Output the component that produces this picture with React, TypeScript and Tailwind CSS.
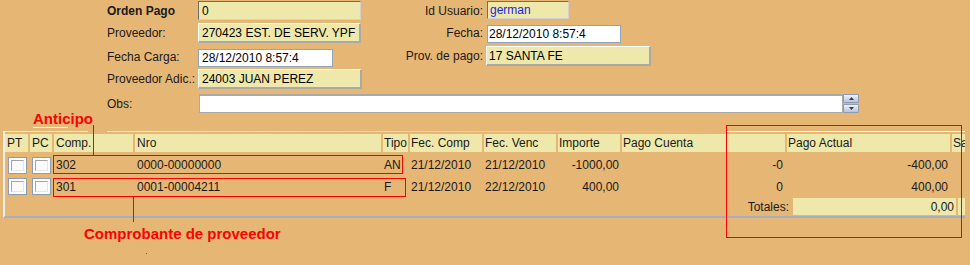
import React from 'react';

const cols = [
  'w-[23px]', 'w-[22px]', 'w-[79px]', 'w-[246px]', 'w-[25px]', 'w-[72px]',
  'w-[72px]', 'w-[62px]', 'w-[163px]', 'w-[163px]', 'w-[40px]',
];
const headPad = [
  'pl-[2px]', 'pl-[2px]', 'pl-[2px]', 'pl-[2px]', 'pl-[1px]', 'pl-[1px]',
  'pl-[1px]', 'pl-[1px]', 'pl-[1px]', 'pl-[1px]', 'pl-[1px]',
];
const dataPad = [
  'pl-[3px]', 'pl-[2px]', 'pl-[2px]', 'pl-[2px]', 'pl-[1px]', 'pl-[1px]',
  'pl-[1px]', 'justify-end pr-[1px]', 'justify-end pr-[2px]', 'justify-end pr-[2px]', '',
];
const headers = ['PT', 'PC', 'Comp.', 'Nro', 'Tipo', 'Fec. Comp', 'Fec. Venc', 'Importe', 'Pago Cuenta', 'Pago Actual', 'Saldo'];

function Check() {
  return (
    <div className="w-[19px] h-[17px] border border-[#8C9CB4] bg-white p-[2px]">
      <div className="w-full h-full border-t border-l border-t-[#A4A4A4] border-l-[#A4A4A4] border-r border-b border-r-[#E6E6E6] border-b-[#E6E6E6] bg-[#FBFBFB]" />
    </div>
  );
}

function DataRow({ cells, h }: { cells: React.ReactNode[]; h: string }) {
  return (
    <div className={`flex gap-x-[2px] ${h}`}>
      {cells.map((c, i) => (
        <div key={i} className={`${cols[i]} shrink-0 flex items-center ${dataPad[i]}`}>
          {c}
        </div>
      ))}
    </div>
  );
}

const inset =
  'border-t border-l border-t-[#6E6E6E] border-l-[#6E6E6E] border-r border-b border-r-[#D2D2D2] border-b-[#D2D2D2]';
const outset =
  'border-t border-l border-t-[#FFFFFF] border-l-[#FFFFFF] border-r-2 border-b-2 border-r-[#A9A9A9] border-b-[#A9A9A9]';
const flat = 'border border-[#8FA3BF]';

export default function App() {
  return (
    <div className="relative w-[970px] h-[265px] overflow-hidden bg-[#E6B674] text-[12px] leading-[14px] text-[#1A1A1A] font-['Liberation_Sans',Arial,sans-serif]">
      {/* Form */}
      <div className="pl-[107px]">
        {/* Row 1 */}
        <div className="flex items-start h-[22px]">
          <div className="w-[91px] mt-[4px] font-bold">Orden Pago</div>
          <div className={`w-[163px] h-[19px] mt-[1px] bg-[#EEE8AA] ${inset} flex items-center pl-[3px] text-black`}>0</div>
          <div className="w-[122px] mt-[4px] text-right">Id Usuario:</div>
          <div className={`ml-[4px] w-[82px] h-[18px] mt-[1px] bg-[#EEE8AA] ${inset} flex items-center pl-[2px] text-[#1F1FE6]`}>german</div>
        </div>
        {/* Row 2 */}
        <div className="flex items-start h-[23px]">
          <div className="w-[91px] mt-[4px]">Proveedor:</div>
          <div className={`w-[163px] h-[20px] mt-[1px] bg-[#EEE8AA] ${outset} flex items-center pl-[3px] text-black`}>270423 EST. DE SERV. YPF</div>
          <div className="w-[122px] mt-[4px] text-right">Fecha:</div>
          <div className={`ml-[4px] w-[134px] h-[18px] mt-[3px] bg-white ${flat} flex items-center pl-[1px] text-black`}>28/12/2010 8:57:4</div>
        </div>
        {/* Row 3 */}
        <div className="flex items-start h-[23px]">
          <div className="w-[91px] mt-[5px]">Fecha Carga:</div>
          <div className={`w-[135px] h-[18px] mt-[4px] bg-white ${flat} flex items-center pl-[3px] text-black`}>28/12/2010 8:57:4</div>
          <div className="w-[28px]" />
          <div className="w-[122px] mt-[4px] text-right">Prov. de pago:</div>
          <div className={`ml-[3px] w-[165px] h-[20px] mt-[1px] bg-[#EEE8AA] ${outset} flex items-center pl-[2px] text-black`}>17 SANTA FE</div>
        </div>
        {/* Row 4 */}
        <div className="flex items-start h-[23px]">
          <div className="w-[91px] mt-[4px]">Proveedor Adic.:</div>
          <div className={`w-[164px] h-[20px] mt-[1px] bg-[#EEE8AA] ${outset} flex items-center pl-[3px] text-black`}>24003 JUAN PEREZ</div>
        </div>
        {/* Row 5 */}
        <div className="flex items-start h-[22px]">
          <div className="w-[92px] mt-[6px]">Obs:</div>
          <div className="w-[644px] h-[19px] mt-[3px] bg-white border border-[#A9A9A9] border-t-2" />
          <div className="mt-[3px] w-[16px] h-[19px] flex flex-col gap-[1px]">
            <div className="h-[9px] border border-[#8E9BB2] rounded-[1px] bg-linear-to-b from-[#EEF2F8] to-[#B9C4D6] flex items-center justify-center">
              <svg width="5" height="3" viewBox="0 0 5 3"><path d="M2.5 0L5 3H0z" fill="#3A3A4A" /></svg>
            </div>
            <div className="h-[9px] border border-[#8E9BB2] rounded-[1px] bg-linear-to-b from-[#EEF2F8] to-[#B9C4D6] flex items-center justify-center">
              <svg width="5" height="3" viewBox="0 0 5 3"><path d="M0 0H5L2.5 3z" fill="#3A3A4A" /></svg>
            </div>
          </div>
        </div>
      </div>

      {/* Anticipo label */}
      <div className="-mt-[3px] pl-[33px] h-[17px] text-[15px] leading-[17px] font-bold text-[#FF0000]">Anticipo</div>

      {/* Table group */}
      <div className="mt-[4px] ml-[3px] w-[962px] overflow-hidden">
        <div className="flex h-[1px]">
          <div className="w-[85px] bg-[#F7F3F0]" />
          <div className="w-[19px]" />
          <div className="w-[608px] bg-linear-to-r from-[#F4F0F0] to-[#B8BCE2]" />
          <div className="w-[12px]" />
          <div className="flex-1 bg-white" />
        </div>
        <div className="border-l-2 border-l-[#F2EEF0] border-b-2 border-b-[#A7ADC2] pt-[2px] pb-[1px]">
          <div className="flex gap-x-[2px] h-[18px]">
            {headers.map((h, i) => (
              <div key={i} className={`${cols[i]} shrink-0 bg-[#EEE8AA] flex items-center whitespace-nowrap overflow-hidden ${headPad[i]}`}>
                {h}
              </div>
            ))}
          </div>
          <div className="mt-[1px]">
            <DataRow
              h="h-[24px]"
              cells={[<Check />, <Check />, '302', '0000-00000000', 'AN', '21/12/2010', '21/12/2010', '-1000,00', '-0', '-400,00', '']}
            />
            <DataRow
              h="h-[19px]"
              cells={[<Check />, <Check />, '301', '0001-00004211', 'F', '21/12/2010', '22/12/2010', '400,00', '0', '400,00', '']}
            />
          </div>
          <div className="mt-[2px] flex gap-x-[2px] h-[17px]">
            <div className="w-[621px] shrink-0" />
            <div className="w-[163px] shrink-0 flex items-center justify-end pr-[2px]">Totales:</div>
            <div className="w-[163px] shrink-0 bg-[#EEE8AA] flex items-center justify-end pr-[2px]">0,00</div>
            <div className="w-[40px] shrink-0 bg-[#EEE8AA]" />
          </div>
        </div>
      </div>

      {/* Comprobante label */}
      <div className="mt-[7px] pl-[84px] h-[17px] text-[15px] leading-[17px] font-bold text-[#FF0000]">Comprobante de proveedor</div>

      {/* Annotation overlays */}
      <div className="absolute left-[33px] top-[127px] w-[35px] h-[1px] bg-[#FAF6F0]" />
      <div className="absolute left-[93px] top-[125px] w-[1px] h-[30px] bg-[#FF0000]" />
      <div className="absolute left-[53px] top-[155px] w-[350px] h-[19px] border border-[#FF0000]" />
      <div className="absolute left-[53px] top-[178px] w-[353px] h-[19px] border border-[#FF0000]" />
      <div className="absolute left-[133px] top-[197px] w-[1px] h-[25px] bg-[#FF0000]" />
      <div className="absolute left-[726px] top-[125px] w-[236px] h-[113px] border border-[#FF0000]" />
      <div className="absolute left-[146px] top-[253px] w-[1px] h-[1px] bg-[#E03020]" />
    </div>
  );
}
